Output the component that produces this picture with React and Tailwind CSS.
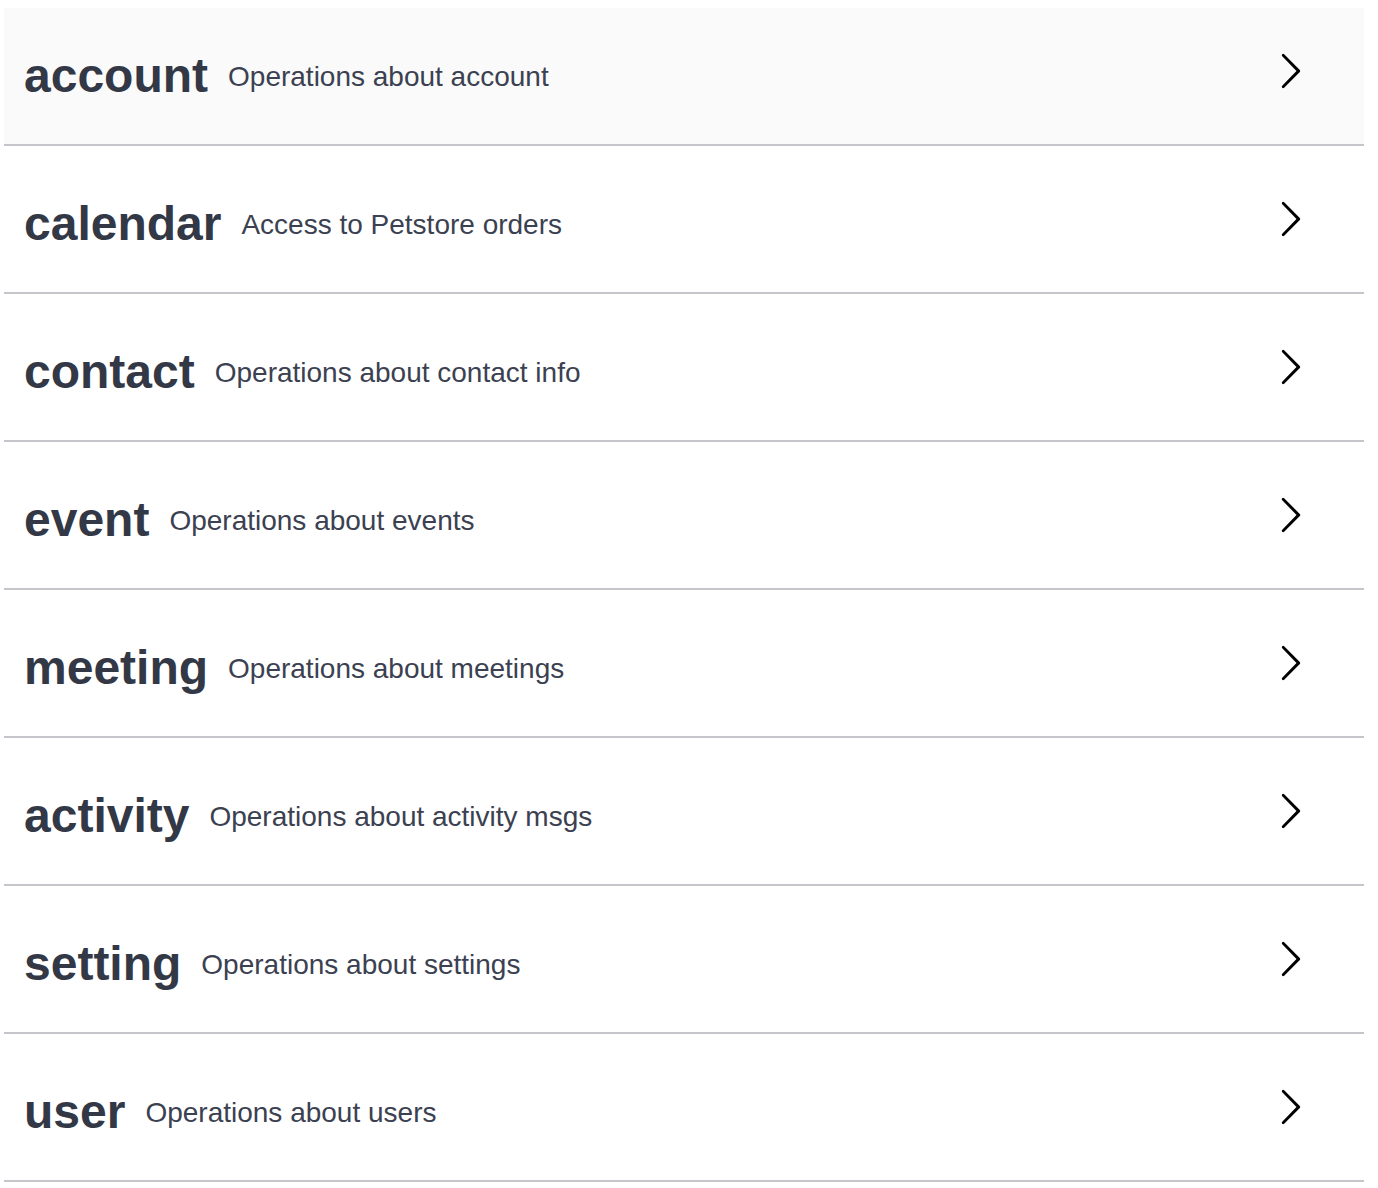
import React from "react";

const rows = [
  ["account", "Operations about account"],
  ["calendar", "Access to Petstore orders"],
  ["contact", "Operations about contact info"],
  ["event", "Operations about events"],
  ["meeting", "Operations about meetings"],
  ["activity", "Operations about activity msgs"],
  ["setting", "Operations about settings"],
  ["user", "Operations about users"],
];

function Arrow() {
  return (
    <svg width="40" height="40" viewBox="0 0 20 20" className="shrink-0">
      <path
        fill="#000"
        d="M13.25 10L6.109 2.58a.697.697 0 0 1 0-.979.68.68 0 0 1 .969 0l7.83 7.908a.697.697 0 0 1 0 .979l-7.83 7.908a.68.68 0 0 1-.969 0 .697.697 0 0 1 0-.979L13.25 10z"
      />
    </svg>
  );
}

export default function App() {
  return (
    <div className="bg-white min-h-[1188px] pt-[8px] pl-[4px] font-['Liberation_Sans',Arial,sans-serif] text-[#3b4151]">
      <div className="w-[1360px] flex flex-col">
        {rows.map(([t, d], i) => (
          <div
            key={t}
            className={`flex items-center h-[138px] mb-[10px] border-b-2 border-[#c4c6cb] pl-[20px] pr-[54px] ${
              i === 0 ? "bg-[#fafafa]" : "bg-white"
            }`}
          >
            <span className="text-[48px] font-bold leading-none text-[#333846]">{t}</span>
            <span className="text-[28px] ml-[20px] flex-1 mt-[2px]">{d}</span>
            <div className="mb-[10px]">
              <Arrow />
            </div>
          </div>
        ))}
      </div>
    </div>
  );
}
